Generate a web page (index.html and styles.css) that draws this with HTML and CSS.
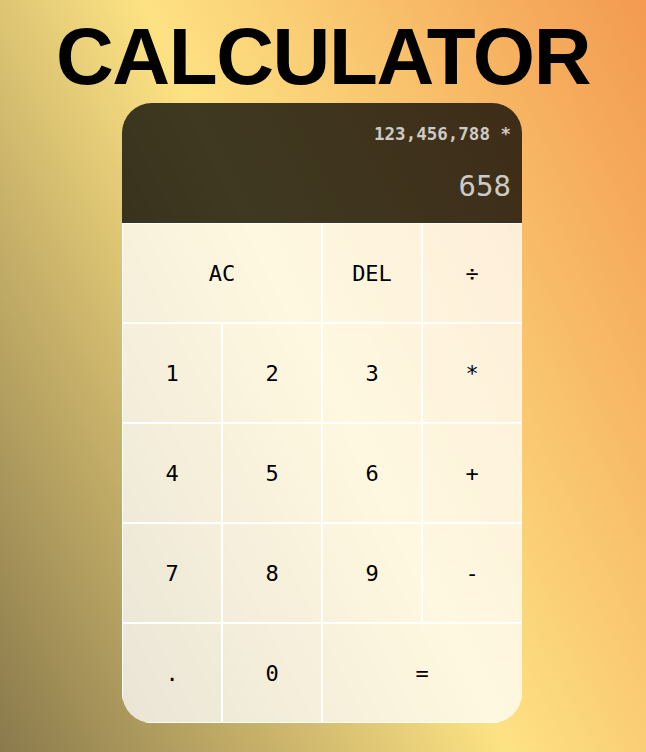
FILE: index.html
```html
<!DOCTYPE html>
<html lang="en">
<head>
<meta charset="utf-8">
<title>Calculator</title>
<link rel="stylesheet" href="styles.css">
</head>
<body>
<h1 class="title">CALCULATOR</h1>
<div class="calculator">
  <div class="output">
    <div class="previous-operand">123,456,788 *</div>
    <div class="current-operand">658</div>
  </div>
  <button class="key span-two">AC</button>
  <button class="key">DEL</button>
  <button class="key">÷</button>
  <button class="key">1</button>
  <button class="key">2</button>
  <button class="key">3</button>
  <button class="key">*</button>
  <button class="key">4</button>
  <button class="key">5</button>
  <button class="key">6</button>
  <button class="key">+</button>
  <button class="key">7</button>
  <button class="key">8</button>
  <button class="key">9</button>
  <button class="key">-</button>
  <button class="key">.</button>
  <button class="key">0</button>
  <button class="key span-two">=</button>
</div>
</body>
</html>
```
FILE: styles.css
```css
* {
  box-sizing: border-box;
}

html, body {
  margin: 0;
  height: 100%;
}

body {
  background: linear-gradient(64deg, #8a7a4c 0%, #fde283 50%, #f39a4f 100%);
  font-family: "DejaVu Sans Mono", monospace;
  padding-top: 17px;
}

.title {
  margin: 0;
  text-align: center;
  font-family: "Liberation Sans", Arial, sans-serif;
  font-weight: bold;
  font-size: 80px;
  line-height: 80px;
  letter-spacing: -1.4px;
  color: #000;
}

.calculator {
  margin: 6px 0 0 calc(50% - 201px);
  width: 400px;
  display: grid;
  grid-template-columns: repeat(4, 100px);
  grid-template-rows: 120px repeat(5, 100px);
  border-radius: 30px;
  overflow: hidden;
}

.output {
  grid-column: 1 / -1;
  background: rgba(0, 0, 0, 0.75);
  display: flex;
  flex-direction: column;
  align-items: flex-end;
  padding: 19px 11px 0 10px;
  color: rgba(255, 255, 255, 0.75);
}

.previous-operand {
  font-size: 17.5px;
  font-weight: bold;
  line-height: 24px;
}

.current-operand {
  margin-top: 23px;
  font-size: 29px;
  line-height: 34px;
}

.key {
  font-family: "DejaVu Sans Mono", monospace;
  font-size: 22px;
  color: #000;
  border: 1px solid #fff;
  background: rgba(255, 255, 255, 0.75);
  padding: 0;
  cursor: pointer;
}

.span-two {
  grid-column: span 2;
}
```
